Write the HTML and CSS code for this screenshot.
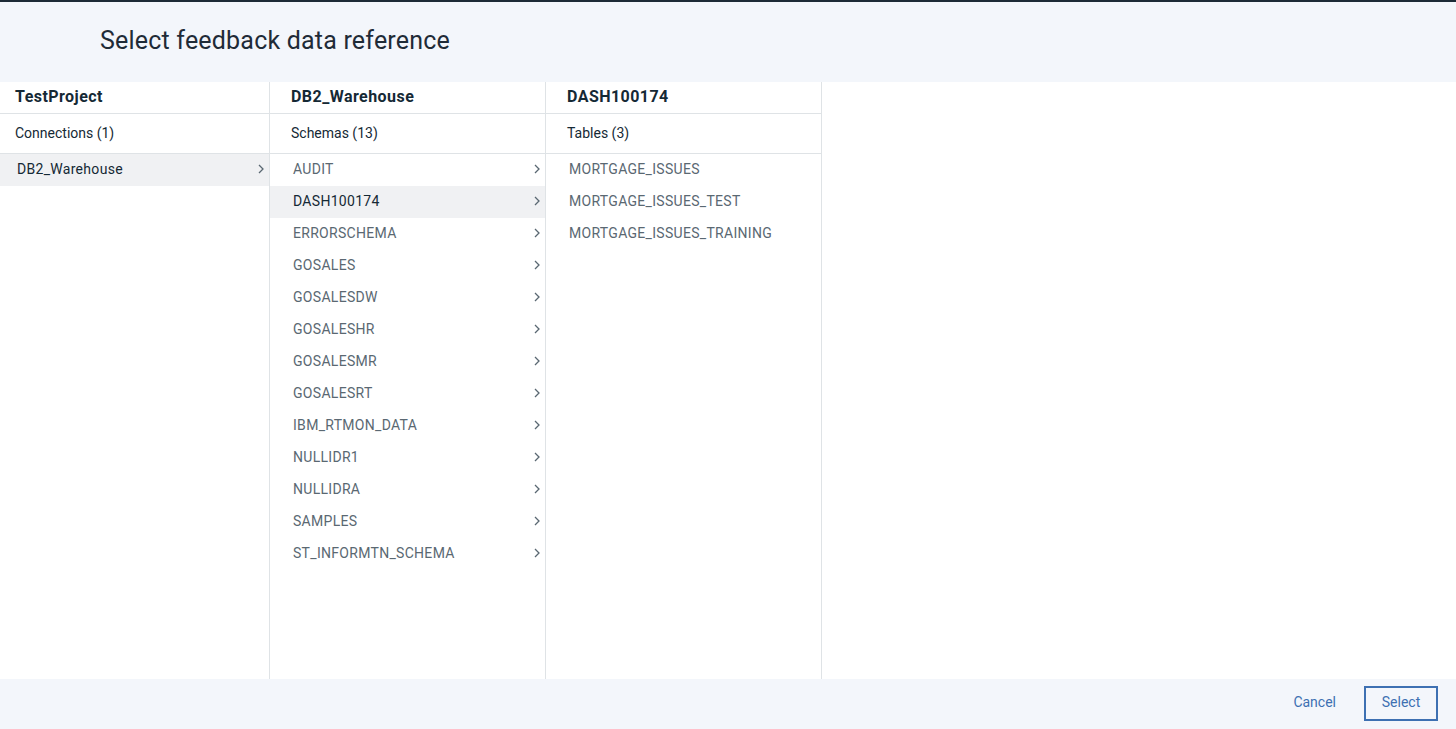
FILE: index.html
```html
<!DOCTYPE html>
<html>
<head>
<meta charset="utf-8">
<link rel="stylesheet" href="styles.css">
</head>
<body>
<div class="modal">
  <header class="modal-header">
    <h1 class="modal-title">Select feedback data reference</h1>
  </header>
  <div class="browser">
    <section class="col col-first">
      <div class="col-title">TestProject</div>
      <div class="col-sub">Connections (1)</div>
      <ul class="list">
        <li class="item selected"><span>DB2_Warehouse</span><svg class="chev" viewBox="0 0 16 16"><path d="M6 4l4 4-4 4" /></svg></li>
      </ul>
    </section>
    <section class="col">
      <div class="col-title">DB2_Warehouse</div>
      <div class="col-sub">Schemas (13)</div>
      <ul class="list">
        <li class="item"><span>AUDIT</span><svg class="chev" viewBox="0 0 16 16"><path d="M6 4l4 4-4 4" /></svg></li>
        <li class="item selected"><span>DASH100174</span><svg class="chev" viewBox="0 0 16 16"><path d="M6 4l4 4-4 4" /></svg></li>
        <li class="item"><span>ERRORSCHEMA</span><svg class="chev" viewBox="0 0 16 16"><path d="M6 4l4 4-4 4" /></svg></li>
        <li class="item"><span>GOSALES</span><svg class="chev" viewBox="0 0 16 16"><path d="M6 4l4 4-4 4" /></svg></li>
        <li class="item"><span>GOSALESDW</span><svg class="chev" viewBox="0 0 16 16"><path d="M6 4l4 4-4 4" /></svg></li>
        <li class="item"><span>GOSALESHR</span><svg class="chev" viewBox="0 0 16 16"><path d="M6 4l4 4-4 4" /></svg></li>
        <li class="item"><span>GOSALESMR</span><svg class="chev" viewBox="0 0 16 16"><path d="M6 4l4 4-4 4" /></svg></li>
        <li class="item"><span>GOSALESRT</span><svg class="chev" viewBox="0 0 16 16"><path d="M6 4l4 4-4 4" /></svg></li>
        <li class="item"><span>IBM_RTMON_DATA</span><svg class="chev" viewBox="0 0 16 16"><path d="M6 4l4 4-4 4" /></svg></li>
        <li class="item"><span>NULLIDR1</span><svg class="chev" viewBox="0 0 16 16"><path d="M6 4l4 4-4 4" /></svg></li>
        <li class="item"><span>NULLIDRA</span><svg class="chev" viewBox="0 0 16 16"><path d="M6 4l4 4-4 4" /></svg></li>
        <li class="item"><span>SAMPLES</span><svg class="chev" viewBox="0 0 16 16"><path d="M6 4l4 4-4 4" /></svg></li>
        <li class="item"><span>ST_INFORMTN_SCHEMA</span><svg class="chev" viewBox="0 0 16 16"><path d="M6 4l4 4-4 4" /></svg></li>
      </ul>
    </section>
    <section class="col">
      <div class="col-title">DASH100174</div>
      <div class="col-sub">Tables (3)</div>
      <ul class="list">
        <li class="item"><span>MORTGAGE_ISSUES</span></li>
        <li class="item"><span>MORTGAGE_ISSUES_TEST</span></li>
        <li class="item"><span>MORTGAGE_ISSUES_TRAINING</span></li>
      </ul>
    </section>
    <div class="col-rest"></div>
  </div>
  <footer class="modal-footer">
    <button class="btn btn-ghost">Cancel</button>
    <button class="btn btn-outline">Select</button>
  </footer>
</div>
</body>
</html>
```
FILE: styles.css
```css
* { box-sizing: border-box; }
html, body { margin: 0; padding: 0; height: 100%; }
body {
  font-family: Roboto, "Liberation Sans", Arial, sans-serif;
  color: #152935;
  background: #ffffff;
}
.modal {
  height: 729px;
  display: flex;
  flex-direction: column;
  border-top: 2px solid #1c2a36;
}
.modal-header {
  background: #f3f6fb;
  height: 80px;
  flex: none;
  padding-left: 100px;
  display: flex;
  align-items: flex-start;
}
.modal-title {
  margin: 24px 0 0 0;
  font-size: 25px;
  font-weight: 400;
  color: #1f2b37;
  letter-spacing: 0.2px;
}
.browser {
  flex: 1;
  display: flex;
  min-height: 0;
}
.col {
  width: 276px;
  flex: none;
  border-right: 1px solid #dfe3e6;
  display: flex;
  flex-direction: column;
}
.col-first { width: 270px; }
.col-rest { flex: 1; }
.col-title {
  height: 32px;
  border-bottom: 1px solid #dfe3e6;
  padding-left: 21px;
  font-size: 16px;
  font-weight: 700;
  line-height: 29px;
  letter-spacing: 0.45px;
  color: #152935;
}
.col-sub {
  height: 40px;
  border-bottom: 1px solid #dfe3e6;
  padding-left: 21px;
  font-size: 14px;
  line-height: 38px;
  color: #152935;
}
.col-first .col-title, .col-first .col-sub { padding-left: 15px; }
.list {
  list-style: none;
  margin: 0;
  padding: 0;
}
.item {
  height: 32px;
  display: flex;
  align-items: center;
  justify-content: space-between;
  padding-left: 23px;
  padding-right: 0;
  padding-bottom: 2px;
  font-size: 14px;
  letter-spacing: 0.3px;
  color: #5a6872;
}
.col-first .item { padding-left: 17px; }
.item.selected {
  background: #f0f1f3;
  color: #152935;
}
.chev {
  width: 16px;
  height: 16px;
  fill: none;
  stroke: #5a6872;
  stroke-width: 1.3;
}
.modal-footer {
  background: #f3f6fb;
  height: 50px;
  flex: none;
  display: flex;
  align-items: flex-start;
  justify-content: flex-end;
  padding-top: 7px;
  padding-right: 18px;
  gap: 28px;
}
.btn {
  font-family: inherit;
  font-size: 14px;
  color: #3d70b2;
  background: transparent;
  cursor: pointer;
}
.btn-ghost {
  border: none;
  padding: 0;
  height: 35px;
  padding-bottom: 3px;
}
.btn-outline {
  border: 2px solid #3d70b2;
  width: 74px;
  height: 35px;
  padding: 0 0 3px 0;
}
```
